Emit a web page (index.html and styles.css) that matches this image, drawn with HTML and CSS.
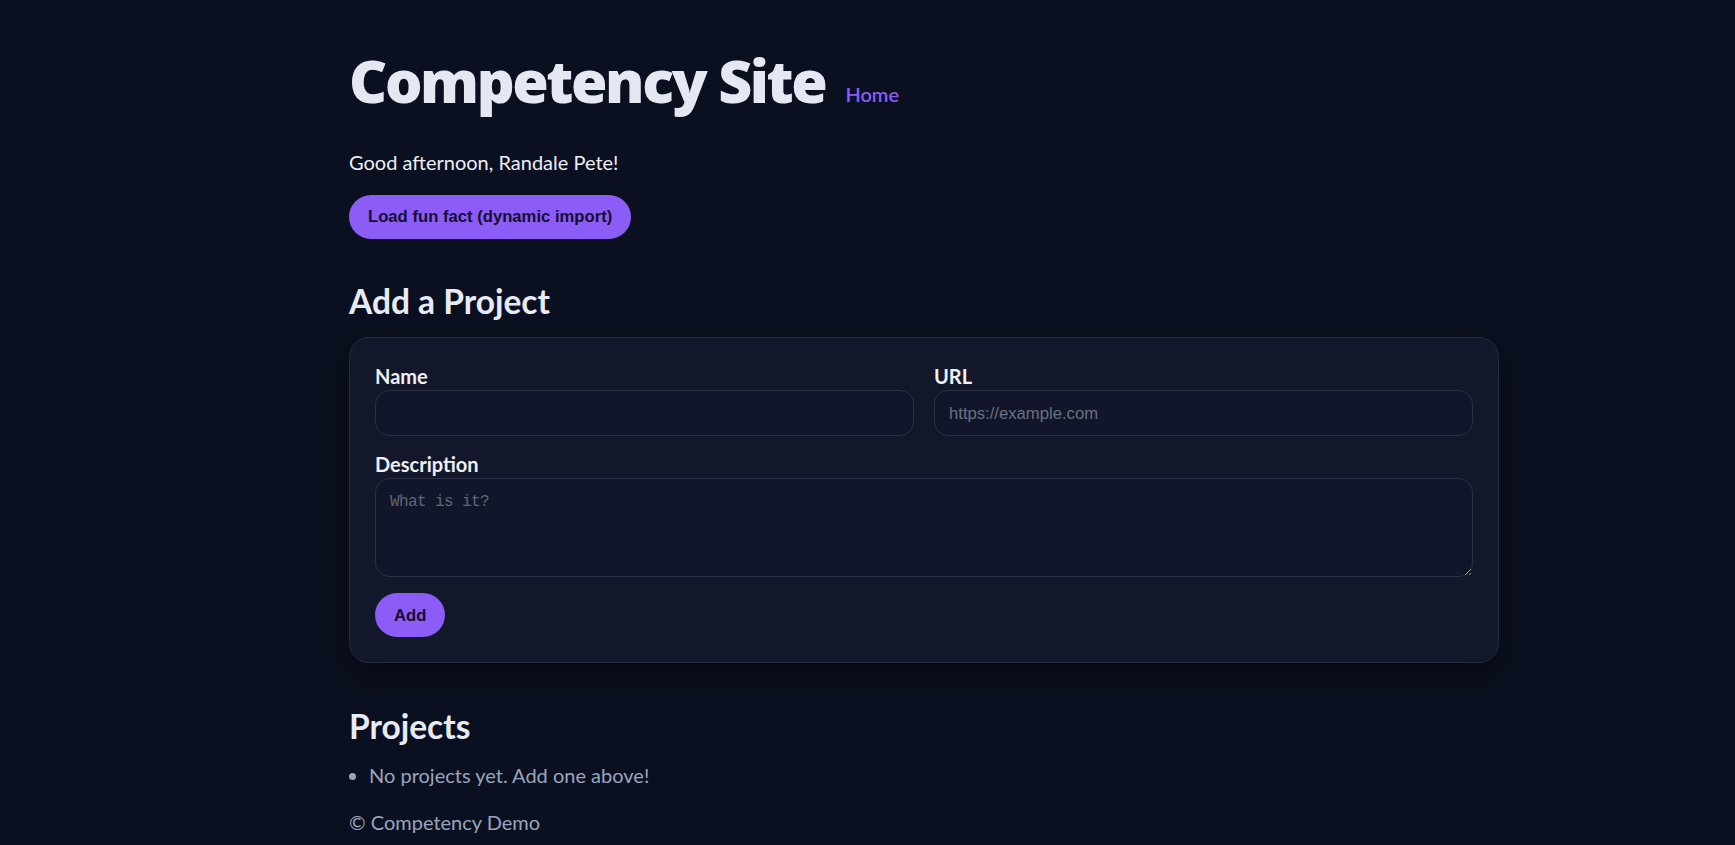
FILE: index.html
```html
<!DOCTYPE html>
<html lang="en">
<head>
<meta charset="utf-8">
<title>Competency Site</title>
<link rel="stylesheet" href="styles.css">
</head>
<body>
<div class="page">
  <header class="site-header">
    <h1 class="site-title">Competency Site</h1>
    <nav class="site-nav"><a class="nav-link" href="#">Home</a></nav>
  </header>
  <main>
    <p class="greeting">Good afternoon, Randale Pete!</p>
    <button class="btn" type="button">Load fun fact (dynamic import)</button>

    <section class="section">
      <h2 class="section-title">Add a Project</h2>
      <form class="card">
        <div class="row">
          <div class="field">
            <label class="label" for="name">Name</label>
            <input class="input" id="name" type="text">
          </div>
          <div class="field">
            <label class="label" for="url">URL</label>
            <input class="input" id="url" type="text" placeholder="https://example.com">
          </div>
        </div>
        <div class="field">
          <label class="label" for="desc">Description</label>
          <textarea class="textarea" id="desc" placeholder="What is it?"></textarea>
        </div>
        <div class="actions">
          <button class="btn" type="button">Add</button>
        </div>
      </form>
    </section>

    <section class="section">
      <h2 class="section-title">Projects</h2>
      <ul class="project-list">
        <li class="project-empty">No projects yet. Add one above!</li>
      </ul>
    </section>
  </main>
  <footer class="site-footer">© Competency Demo</footer>
</div>
</body>
</html>
```

FILE: styles.css
```css
html, body {
  margin: 0;
  padding: 0;
  background: #0b1020;
}

body {
  font-family: "Lato", "Noto Sans", sans-serif;
  font-size: 20px;
  color: #e6e8f3;
}

.page {
  max-width: 1037px;
  margin: 0 auto;
  padding-top: 40px;
}

.site-header {
  display: flex;
  align-items: baseline;
  gap: 20px;
}

.site-title {
  margin: 0;
  font-family: "Open Sans", "Lato", sans-serif;
  font-size: 59px;
  line-height: 80px;
  font-weight: 800;
  color: #e5e7f3;
  letter-spacing: -2.4px;
}

.nav-link {
  font-size: 20px;
  line-height: 27px;
  font-weight: 600;
  color: #8b5cf6;
  text-decoration: none;
  position: relative;
  top: -1px;
}

.greeting {
  margin: 29px 0 0;
  line-height: 26.6px;
  color: #eceef6;
}

.btn {
  display: inline-block;
  margin-top: 19.4px;
  padding: 12.4px 19px;
  border: 0;
  border-radius: 999px;
  background: #8b5cf6;
  color: #160e30;
  font-family: "Liberation Sans", Arial, sans-serif;
  font-size: 16.67px;
  font-weight: 700;
  line-height: 19.2px;
  cursor: pointer;
}

.section {
  margin-top: 40.5px;
}

.section-title {
  margin: 0 0 14px;
  font-size: 33.5px;
  line-height: 44px;
  font-weight: 700;
  color: #e8eaf6;
}

.card {
  box-sizing: border-box;
  width: 1150px;
  padding: 25px;
  background: #121729;
  border: 1px solid #262b40;
  border-radius: 20px;
  box-shadow: 0 12px 36px rgba(0, 0, 0, 0.45);
  display: flex;
  flex-direction: column;
  gap: 15px;
}

.row {
  display: grid;
  grid-template-columns: 1fr 1fr;
  column-gap: 20px;
}

.field {
  display: flex;
  flex-direction: column;
}

.label {
  font-size: 20px;
  line-height: 27px;
  font-weight: 700;
  color: #eef0f8;
}

.input,
.textarea {
  box-sizing: border-box;
  width: 100%;
  background: #11162a;
  border: 1px solid #2a2f45;
  border-radius: 14px;
  color: #e6e8f3;
  outline: none;
}

.input {
  height: 46px;
  padding: 1px 14px 0;
  font-family: "Liberation Sans", Arial, sans-serif;
  font-size: 16.67px;
}

.input::placeholder {
  color: #6b7180;
}

.textarea {
  height: 99px;
  padding: 14px 14px 12px;
  font-family: "Liberation Mono", monospace;
  font-size: 16px;
  letter-spacing: -0.6px;
  resize: vertical;
}

.textarea::placeholder {
  color: #5f6675;
}

.actions {
  margin-top: 1px;
}

.actions .btn {
  margin-top: 0;
}

.project-list {
  margin: 0;
  padding-left: 20px;
  color: #9aa5bd;
}

.project-empty {
  line-height: 27px;
}

.site-footer {
  margin-top: 20px;
  line-height: 27px;
  color: #9aa5bd;
}
```
